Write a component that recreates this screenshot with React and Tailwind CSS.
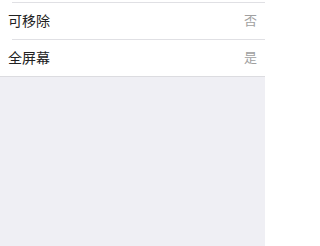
import React from "react";

const rows = [
	{ label: "可移除", value: "否" },
	{ label: "全屏幕", value: "是" },
];

const App = () => {
	return (
		<div
			className="w-[265px] min-h-[246px] bg-[#efeff4]"
			style={{ fontFamily: '"Liberation Sans", "Noto Sans CJK SC", sans-serif' }}
		>
			<div className="bg-white pt-[2px] border-b border-[#dcdce0]">
				{rows.map((r) => (
					<div key={r.label}>
						<div className="ml-[12px] h-px bg-[#e0e0e4]" />
						<div className="flex h-[36px] items-center justify-between px-2">
							<span className="text-[14px] text-[#222]">{r.label}</span>
							<span className="text-[13px] text-[#a0a0a0]">{r.value}</span>
						</div>
					</div>
				))}
			</div>
		</div>
	);
};

export default App;
